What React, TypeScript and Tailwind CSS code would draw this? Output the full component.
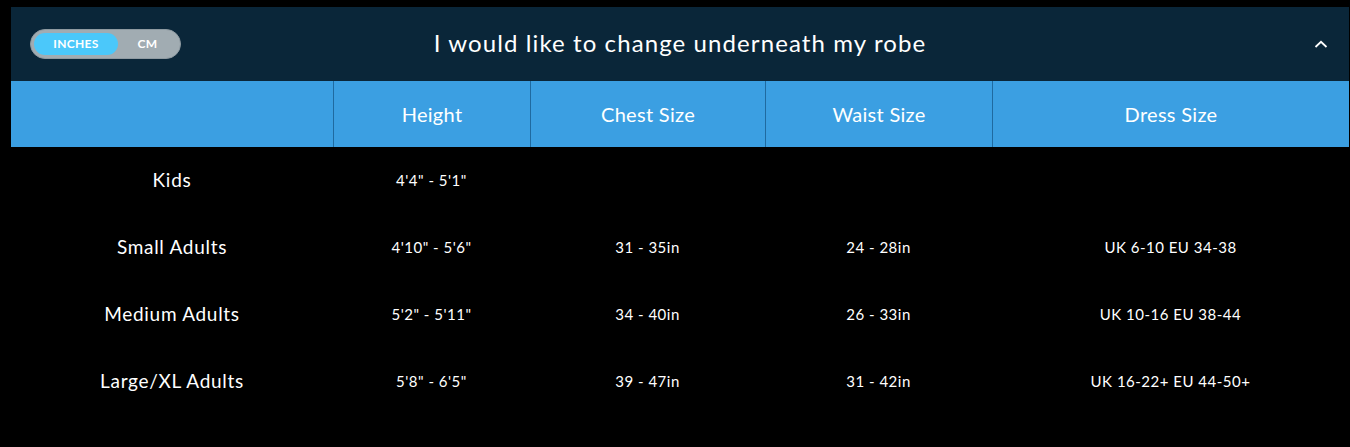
import React, { useState } from 'react';

const rows = [
  { label: 'Kids', height: '4\'4" - 5\'1"', chest: '', waist: '', dress: '' },
  { label: 'Small Adults', height: '4\'10" - 5\'6"', chest: '31 - 35in', waist: '24 - 28in', dress: 'UK 6-10 EU 34-38' },
  { label: 'Medium Adults', height: '5\'2" - 5\'11"', chest: '34 - 40in', waist: '26 - 33in', dress: 'UK 10-16 EU 38-44' },
  { label: 'Large/XL Adults', height: '5\'8" - 6\'5"', chest: '39 - 47in', waist: '31 - 42in', dress: 'UK 16-22+ EU 44-50+' },
];

const cols = ['w-[322px]', 'w-[197px]', 'w-[235px]', 'w-[227px]', 'flex-1'];

export default function App() {
  const [unit, setUnit] = useState<'in' | 'cm'>('in');

  return (
    <div className="min-h-[447px] bg-black pt-[7px] pl-[11px] pr-[1px] font-['Lato',sans-serif] text-white">
      {/* Header */}
      <div className="relative flex h-[74px] items-center justify-center bg-[#0a2639]">
        <div className="absolute left-[19px] top-[22px] flex h-[30px] w-[151px] items-center rounded-full border border-[#8e9aa1] bg-[#a1acb2] p-[3px]">
          <button
            onClick={() => setUnit('in')}
            className={`h-[22px] w-[84px] rounded-full text-[12px] font-bold tracking-[0.3px] ${unit === 'in' ? 'bg-[#4bc8fa]' : ''}`}
          >
            INCHES
          </button>
          <button
            onClick={() => setUnit('cm')}
            className={`h-[22px] flex-1 rounded-full text-[12px] font-bold tracking-[0.3px] ${unit === 'cm' ? 'bg-[#4bc8fa]' : ''}`}
          >
            CM
          </button>
        </div>
        <h1 className="-mt-[2px] text-[24px] font-normal tracking-[1.1px]">I would like to change underneath my robe</h1>
        <svg className="absolute right-[21px] top-[33px]" width="14" height="9" viewBox="0 0 14 9" fill="none">
          <path d="M1.5 7L7 1.8 12.5 7" stroke="white" strokeWidth="1.8" />
        </svg>
      </div>

      {/* Table header */}
      <div className="flex h-[66px] bg-[#3b9fe2] text-[20px] font-normal tracking-[0.3px]">
        {['', 'Height', 'Chest Size', 'Waist Size', 'Dress Size'].map((h, i) => (
          <div
            key={i}
            className={`${cols[i]} flex items-center justify-center ${i > 0 ? 'border-l border-[#1f6aa0]' : ''}`}
          >
            {h}
          </div>
        ))}
      </div>

      {/* Rows */}
      {rows.map((r) => (
        <div key={r.label} className="flex h-[67px] items-center text-[15px] font-normal tracking-[0.5px]">
          <div className={`${cols[0]} text-center text-[19px] tracking-[0.7px]`}>{r.label}</div>
          <div className={`${cols[1]} text-center`}>{r.height}</div>
          <div className={`${cols[2]} text-center`}>{r.chest}</div>
          <div className={`${cols[3]} text-center`}>{r.waist}</div>
          <div className={`${cols[4]} text-center`}>{r.dress}</div>
        </div>
      ))}
    </div>
  );
}
